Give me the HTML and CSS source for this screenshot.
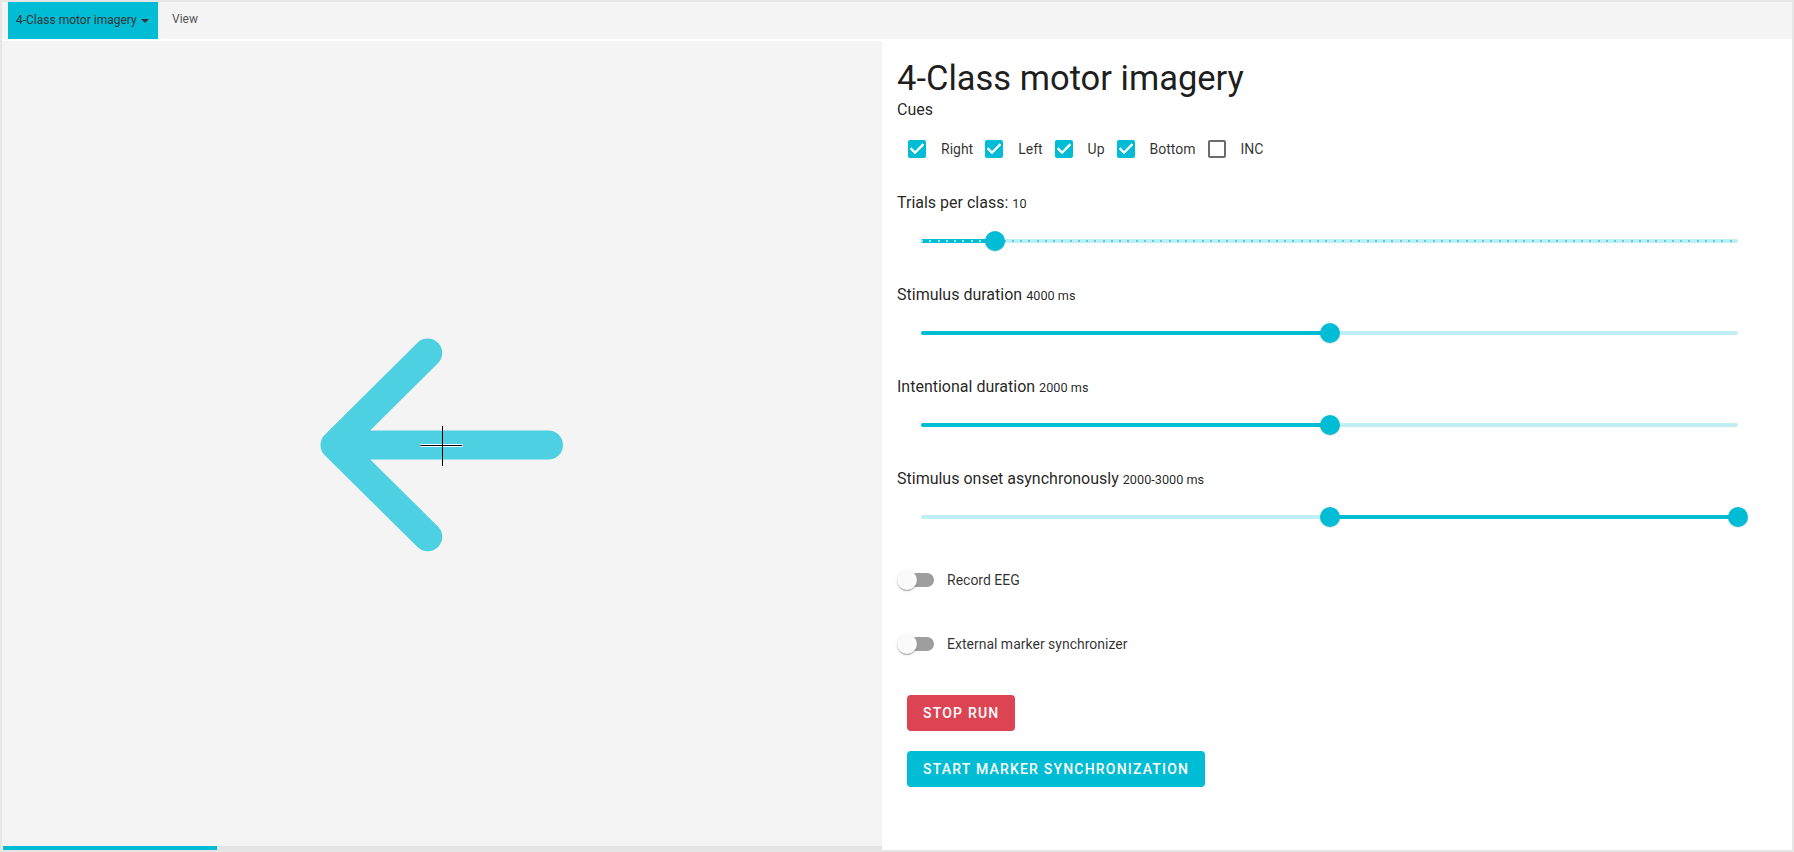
FILE: index.html
```html
<!DOCTYPE html>
<html>
<head>
<meta charset="utf-8">
<link rel="stylesheet" href="styles.css">
</head>
<body>
<div class="app">
  <nav class="nav">
    <div class="tab tab-current">4-Class motor imagery <span class="caret"></span></div>
    <div class="tab">View</div>
  </nav>
  <main class="main">
    <section class="stage-col">
      <div class="stage">
        <svg class="arrow" width="244" height="214" viewBox="0 0 244 214">
          <path d="M228.5 107 H15 M107.7 15 L15 107 L107.7 198.7" fill="none" stroke="#4dd0e1" stroke-width="29" stroke-linecap="round" stroke-linejoin="round"/>
          <rect x="100.5" y="106" width="42" height="3" fill="#fff"/>
          <line x1="100.5" y1="107.5" x2="142" y2="107.5" stroke="#000" stroke-width="1"/>
          <line x1="122.5" y1="88" x2="122.5" y2="128" stroke="#000" stroke-width="1"/>
        </svg>
      </div>
      <div class="progress"><div class="progress-bar" style="width:24.4%"></div></div>
    </section>
    <section class="panel">
      <h1 class="title">4-Class motor imagery</h1>
      <div class="label">Cues</div>
      <div class="cues">
        <label class="cue"><svg class="cb" viewBox="3 3 18 18" width="18" height="18"><path fill="#00bcd4" d="M19 3H5c-1.11 0-2 .9-2 2v14c0 1.1.89 2 2 2h14c1.11 0 2-.9 2-2V5c0-1.1-.89-2-2-2zm-9 14l-5-5 1.41-1.410L10 14.17l7.59-7.59L19 8l-9 9z"/><path fill="#fff" d="M10 17l-5-5 1.41-1.41L10 14.17l7.59-7.59L19 8l-9 9z"/></svg><span>Right</span></label>
        <label class="cue"><svg class="cb" viewBox="3 3 18 18" width="18" height="18"><path fill="#00bcd4" d="M19 3H5c-1.11 0-2 .9-2 2v14c0 1.1.89 2 2 2h14c1.11 0 2-.9 2-2V5c0-1.1-.89-2-2-2zm-9 14l-5-5 1.41-1.41L10 14.17l7.59-7.59L19 8l-9 9z"/><path fill="#fff" d="M10 17l-5-5 1.41-1.41L10 14.17l7.59-7.59L19 8l-9 9z"/></svg><span>Left</span></label>
        <label class="cue"><svg class="cb" viewBox="3 3 18 18" width="18" height="18"><path fill="#00bcd4" d="M19 3H5c-1.11 0-2 .9-2 2v14c0 1.1.89 2 2 2h14c1.11 0 2-.9 2-2V5c0-1.1-.89-2-2-2zm-9 14l-5-5 1.41-1.41L10 14.17l7.59-7.59L19 8l-9 9z"/><path fill="#fff" d="M10 17l-5-5 1.41-1.41L10 14.17l7.59-7.59L19 8l-9 9z"/></svg><span>Up</span></label>
        <label class="cue"><svg class="cb" viewBox="3 3 18 18" width="18" height="18"><path fill="#00bcd4" d="M19 3H5c-1.11 0-2 .9-2 2v14c0 1.1.89 2 2 2h14c1.11 0 2-.9 2-2V5c0-1.1-.89-2-2-2zm-9 14l-5-5 1.41-1.41L10 14.17l7.59-7.59L19 8l-9 9z"/><path fill="#fff" d="M10 17l-5-5 1.41-1.41L10 14.17l7.59-7.59L19 8l-9 9z"/></svg><span>Bottom</span></label>
        <label class="cue"><svg class="cb" viewBox="3 3 18 18" width="18" height="18"><path fill="#6b6b6b" d="M19 5v14H5V5h14m0-2H5c-1.1 0-2 .9-2 2v14c0 1.1.9 2 2 2h14c1.1 0 2-.9 2-2V5c0-1.1-.9-2-2-2z"/></svg><span>INC</span></label>
      </div>

      <div class="block">
        <div class="label">Trials per class: <small>10</small></div>
        <div class="slider">
          <div class="track marks"></div>
          <div class="fill marks-on" style="left:0;width:9.09%"></div>
          <div class="thumb" style="left:9.09%"></div>
        </div>
      </div>
      <div class="block">
        <div class="label">Stimulus duration <small>4000 ms</small></div>
        <div class="slider">
          <div class="track"></div>
          <div class="fill" style="left:0;width:50%"></div>
          <div class="thumb" style="left:50%"></div>
        </div>
      </div>
      <div class="block">
        <div class="label">Intentional duration <small>2000 ms</small></div>
        <div class="slider">
          <div class="track"></div>
          <div class="fill" style="left:0;width:50%"></div>
          <div class="thumb" style="left:50%"></div>
        </div>
      </div>
      <div class="block">
        <div class="label">Stimulus onset asynchronously <small>2000-3000 ms</small></div>
        <div class="slider">
          <div class="track"></div>
          <div class="fill" style="left:50%;width:50%"></div>
          <div class="thumb" style="left:50%"></div>
          <div class="thumb" style="left:100%"></div>
        </div>
      </div>

      <label class="switch-row first"><span class="switch"><span class="sw-track"></span><span class="sw-thumb"></span></span><span>Record EEG</span></label>
      <label class="switch-row second"><span class="switch"><span class="sw-track"></span><span class="sw-thumb"></span></span><span>External marker synchronizer</span></label>

      <div class="buttons">
        <button class="btn btn-red">Stop run</button>
        <button class="btn btn-cyan">Start marker synchronization</button>
      </div>
    </section>
  </main>
</div>
</body>
</html>
```
FILE: styles.css
```css
* { box-sizing: border-box; }
html, body { margin: 0; padding: 0; }
body { font-family: Roboto, "Liberation Sans", sans-serif; color: rgba(0,0,0,0.87); }

.app {
  width: 1794px;
  height: 852px;
  background: #e6e6e6;
  padding: 2px;
  display: flex;
  flex-direction: column;
}

.nav {
  height: 39px;
  flex: none;
  background: #f4f4f4;
  border-bottom: 2px solid #fff;
  display: flex;
  align-items: stretch;
  padding-left: 6px;
}
.tab {
  font-size: 12px;
  color: #555;
  display: flex;
  align-items: center;
  white-space: nowrap;
  padding: 0 0 3px 14px;
}
.tab-current {
  background: #00bcd4;
  color: #333;
  width: 150px;
  padding: 0 8px 1px 8px;
}
.caret {
  display: inline-block;
  width: 0; height: 0;
  border-left: 4px solid transparent;
  border-right: 4px solid transparent;
  border-top: 4px solid #333;
  margin-left: 4px;
  margin-top: 1px;
}

.main {
  flex: 1;
  display: flex;
  min-height: 0;
}
.stage-col {
  width: 880px;
  flex: none;
  display: flex;
  flex-direction: column;
  background: #f4f4f4;
}
.stage {
  flex: 1;
  display: flex;
  align-items: center;
  justify-content: center;
  padding-top: 3px;
}
.progress {
  height: 4px;
  background: #e4e4e4;
  margin-left: 1px;
}
.progress-bar { height: 100%; background: #00bcd4; }

.panel {
  flex: 1;
  background: #fff;
  padding: 17px 15px 0 15px;
}
.title {
  margin: 0;
  font-size: 34.5px;
  font-weight: 400;
  line-height: 40px;
  padding-bottom: 2px;
  height: 42px;
  color: rgba(0,0,0,0.9);
}
.label {
  font-size: 16px;
  line-height: 20px;
  height: 20px;
}
.label small { font-size: 12.7px; line-height: 0; }

.cues {
  display: flex;
  align-items: center;
  height: 42px;
  margin-top: 8px;
  padding-left: 11px;
}
.cue {
  display: flex;
  align-items: center;
  font-size: 14px;
  color: rgba(0,0,0,0.82);
  margin-right: 12px;
}
.cb { display: block; margin-right: 15px; }

.cues + .block { margin-top: 23px; }
.slider {
  position: relative;
  height: 40px;
  margin: 8px 39px 24px 24px;
}
.track, .fill {
  position: absolute;
  top: 18px;
  height: 4px;
  border-radius: 2px;
}
.track { left: 0; right: 0; background: #bfeef4; }
.fill { background: #00bcd4; }
.marks {
  background: repeating-linear-gradient(to right, #4fd2e2 0 2px, transparent 2px 8.2525px) 0 50% / 100% 2px no-repeat, #bfeef4;
}
.marks-on {
  background: repeating-linear-gradient(to right, #a8e8f1 0 2px, transparent 2px 8.2525px) 0 50% / 100% 2px no-repeat, #00bcd4;
}
.thumb {
  position: absolute;
  top: 10px;
  width: 20px;
  height: 20px;
  margin-left: -10px;
  border-radius: 50%;
  background: #00bcd4;
  box-shadow: 0 1px 1px rgba(0,0,0,0.12);
}

.switch-row {
  display: flex;
  align-items: center;
  height: 38px;
  font-size: 14px;
  color: rgba(0,0,0,0.82);
}
.switch-row.first { margin-top: 2px; }
.switch-row.second { margin-top: 26px; }
.switch {
  position: relative;
  width: 50px;
  height: 38px;
  flex: none;
}
.sw-track {
  position: absolute;
  left: 3px; top: 12px;
  width: 34px; height: 14px;
  border-radius: 7px;
  background: #9e9e9e;
}
.sw-thumb {
  position: absolute;
  left: 0; top: 9px;
  width: 20px; height: 20px;
  border-radius: 50%;
  background: #fafafa;
  box-shadow: 0 2px 1px -1px rgba(0,0,0,0.2), 0 1px 1px 0 rgba(0,0,0,0.14), 0 1px 3px 0 rgba(0,0,0,0.12);
}

.buttons {
  display: flex;
  flex-direction: column;
  align-items: flex-start;
  gap: 20px;
  margin-top: 32px;
  padding-left: 10px;
}
.btn {
  height: 36px;
  padding: 0 16px;
  border: none;
  border-radius: 4px;
  font-family: Roboto, "Liberation Sans", sans-serif;
  font-size: 14px;
  font-weight: 500;
  letter-spacing: 1.2px;
  text-transform: uppercase;
  color: #fff;
}
.btn-red { background: #dc4453; }
.btn-cyan { background: #00bcd4; }
```
